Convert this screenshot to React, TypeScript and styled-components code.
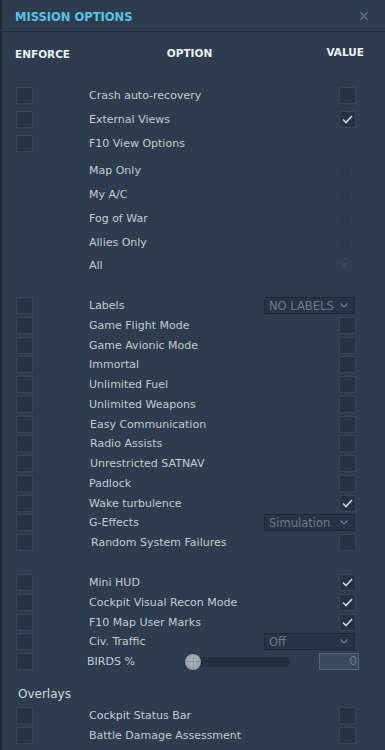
import React from 'react';
import styled, { createGlobalStyle } from 'styled-components';

const GlobalStyle = createGlobalStyle`
  html, body {
    margin: 0;
    padding: 0;
    background: #2d3c4e;
  }
  * {
    box-sizing: border-box;
  }
`;

type Opt = {
  label: string;
  value?: 'check' | 'on' | 'none' | 'radio' | 'radioOn' | 'select' | 'slider';
  select?: string;
  enforce?: boolean;
  indent?: number;
};

const topOptions: Opt[] = [
  { label: 'Crash auto-recovery', value: 'check', enforce: true },
  { label: 'External Views', value: 'on', enforce: true },
  { label: 'F10 View Options', value: 'none', enforce: true },
];

const viewOptions: Opt[] = [
  { label: 'Map Only', value: 'radio' },
  { label: 'My A/C', value: 'radio' },
  { label: 'Fog of War', value: 'radio' },
  { label: 'Allies Only', value: 'radio' },
  { label: 'All', value: 'radioOn' },
];

const gameOptions: Opt[] = [
  { label: 'Labels', value: 'select', select: 'NO LABELS', enforce: true },
  { label: 'Game Flight Mode', value: 'check', enforce: true },
  { label: 'Game Avionic Mode', value: 'check', enforce: true },
  { label: 'Immortal', value: 'check', enforce: true },
  { label: 'Unlimited Fuel', value: 'check', enforce: true },
  { label: 'Unlimited Weapons', value: 'check', enforce: true },
  { label: 'Easy Communication', value: 'check', enforce: true, indent: 1 },
  { label: 'Radio Assists', value: 'check', enforce: true, indent: 1 },
  { label: 'Unrestricted SATNAV', value: 'check', enforce: true, indent: 1 },
  { label: 'Padlock', value: 'check', enforce: true },
  { label: 'Wake turbulence', value: 'on', enforce: true },
  { label: 'G-Effects', value: 'select', select: 'Simulation', enforce: true },
  { label: 'Random System Failures', value: 'check', enforce: true, indent: 2 },
];

const miscOptions: Opt[] = [
  { label: 'Mini HUD', value: 'on', enforce: true },
  { label: 'Cockpit Visual Recon Mode', value: 'on', enforce: true },
  { label: 'F10 Map User Marks', value: 'on', enforce: true },
  { label: 'Civ. Traffic', value: 'select', select: 'Off', enforce: true },
  { label: 'BIRDS %', value: 'slider', enforce: true, indent: -2 },
];

const overlayOptions: Opt[] = [
  { label: 'Cockpit Status Bar', value: 'check', enforce: true },
  { label: 'Battle Damage Assessment', value: 'check', enforce: true },
];

const Check = ({ on }: { on?: boolean }) => (
  <Box>
    {on && (
      <svg width="11" height="9" viewBox="0 0 11 9">
        <polyline points="1,4.5 4,7.5 10,1" fill="none" stroke="#d3d9df" strokeWidth="1.6" />
      </svg>
    )}
  </Box>
);

const Chevron = () => (
  <svg width="8" height="5" viewBox="0 0 8 5">
    <polyline points="0.5,0.5 4,4 7.5,0.5" fill="none" stroke="#7b8794" strokeWidth="1.1" />
  </svg>
);

const ValueCell = ({ o }: { o: Opt }) => {
  switch (o.value) {
    case 'check':
      return <Check />;
    case 'on':
      return <Check on />;
    case 'radio':
      return <Radio />;
    case 'radioOn':
      return (
        <Radio>
          <RadioDot />
        </Radio>
      );
    case 'select':
      return (
        <Select>
          <span>{o.select}</span>
          <Chevron />
        </Select>
      );
    case 'slider':
      return (
        <SliderWrap>
          <Slider>
            <Track />
            <Thumb />
          </Slider>
          <NumberBox>0</NumberBox>
        </SliderWrap>
      );
    default:
      return null;
  }
};

const OptionRow = ({ o, h }: { o: Opt; h: number }) => (
  <Row $h={h}>
    {o.enforce ? <Box /> : <BoxSpacer />}
    <Label $indent={o.indent ?? 0}>{o.label}</Label>
    <Value $wide={o.value === 'slider'} $radio={o.value === 'radio' || o.value === 'radioOn'}>
      <ValueCell o={o} />
    </Value>
  </Row>
);

export default function App() {
  return (
    <>
      <GlobalStyle />
      <Panel>
        <Header>
          <Title>MISSION OPTIONS</Title>
          <Close>×</Close>
        </Header>
        <ColumnHeads>
          <HeadCell>ENFORCE</HeadCell>
          <HeadCell>OPTION</HeadCell>
          <HeadCell $right>VALUE</HeadCell>
        </ColumnHeads>
        <List>
          <Section>
            {topOptions.map((o) => (
              <OptionRow key={o.label} o={o} h={24} />
            ))}
          </Section>
          <Section $top={4}>
            {viewOptions.map((o) => (
              <OptionRow key={o.label} o={o} h={23.75} />
            ))}
          </Section>
          <Section $top={18}>
            {gameOptions.map((o) => (
              <OptionRow key={o.label} o={o} h={19.75} />
            ))}
          </Section>
          <Section $top={20.2}>
            {miscOptions.map((o) => (
              <OptionRow key={o.label} o={o} h={19.75} />
            ))}
          </Section>
          <GroupTitle>Overlays</GroupTitle>
          <Section>
            {overlayOptions.map((o) => (
              <OptionRow key={o.label} o={o} h={20} />
            ))}
          </Section>
        </List>
      </Panel>
    </>
  );
}

const Panel = styled.div`
  width: 385px;
  height: 750px;
  overflow: hidden;
  background: #2d3c4e;
  border-left: 2px solid #1d2836;
  font-family: 'DejaVu Sans', 'Liberation Sans', sans-serif;
`;

const Header = styled.div`
  height: 32px;
  display: flex;
  align-items: center;
  justify-content: space-between;
  padding: 2px 15px 0 13px;
  border-bottom: 1px solid #1f2b39;
`;

const Title = styled.div`
  color: #5bc2e5;
  font-weight: bold;
  font-size: 11.5px;
`;

const Close = styled.div`
  color: #5c7085;
  font-size: 15px;
  line-height: 1;
`;

const ColumnHeads = styled.div`
  height: 44px;
  display: grid;
  grid-template-columns: 1fr auto 1fr;
  align-items: center;
  padding: 0 21px 0 13px;
`;

const HeadCell = styled.div<{ $right?: boolean }>`
  color: #eef2f5;
  font-weight: bold;
  font-size: 10.5px;
  justify-self: ${(p) => (p.$right ? 'end' : 'start')};
  margin-bottom: ${(p) => (p.$right ? '4px' : '0')};
  &:nth-child(2) {
    justify-self: center;
    margin-bottom: 2px;
  }
`;

const List = styled.div`
  padding: 7px 29px 0 14px;
`;

const Section = styled.div<{ $top?: number }>`
  margin-top: ${(p) => p.$top ?? 0}px;
`;

const Row = styled.div<{ $h: number }>`
  height: ${(p) => p.$h}px;
  display: flex;
  align-items: center;
`;

const Box = styled.div`
  width: 17px;
  height: 17px;
  flex: none;
  background: #253345;
  border: 1px solid #34465a;
  display: flex;
  align-items: center;
  justify-content: center;
`;

const BoxSpacer = styled.div`
  width: 17px;
  flex: none;
`;

const Label = styled.div<{ $indent: number }>`
  margin-left: ${(p) => 56 + p.$indent}px;
  color: #c6ccd3;
  font-size: 11px;
  white-space: nowrap;
`;

const Value = styled.div<{ $wide?: boolean; $radio?: boolean }>`
  margin-left: auto;
  margin-right: ${(p) => (p.$wide ? '-3px' : p.$radio ? '4px' : '0')};
  display: flex;
  align-items: center;
`;

const Radio = styled.div`
  width: 15px;
  height: 15px;
  border-radius: 50%;
  border: 1px solid #34465a;
  display: flex;
  align-items: center;
  justify-content: center;
`;

const RadioDot = styled.div`
  width: 7px;
  height: 7px;
  border-radius: 50%;
  background: #33445a;
`;

const Select = styled.div`
  width: 91px;
  height: 17px;
  margin-right: 1px;
  background: #263447;
  border: 1px solid #1e2936;
  display: flex;
  align-items: center;
  justify-content: space-between;
  padding: 0 6px 0 4px;
  color: #707c89;
  font-size: 11.5px;
`;

const SliderWrap = styled.div`
  display: flex;
  align-items: center;
  gap: 29px;
`;

const Slider = styled.div`
  position: relative;
  width: 105px;
  height: 16px;
  display: flex;
  align-items: center;
`;

const Track = styled.div`
  margin-left: 7px;
  width: 98px;
  height: 10px;
  border-radius: 5px;
  background: #233142;
`;

const Thumb = styled.div`
  position: absolute;
  left: 0;
  top: 0;
  width: 16px;
  height: 16px;
  border-radius: 50%;
  background:
    linear-gradient(#8d97a3, #8d97a3) center / 1px 100% no-repeat,
    linear-gradient(#8d97a3, #8d97a3) center / 100% 1px no-repeat,
    radial-gradient(circle at 50% 45%, #b5bdc6 0%, #98a2ad 60%, #7f8995 100%);
`;

const NumberBox = styled.div`
  width: 40px;
  height: 17px;
  background: #3a4a5d;
  border: 1px solid #56687b;
  color: #6d7d8e;
  font-size: 12px;
  text-align: right;
  padding-right: 1px;
  line-height: 15px;
`;

const GroupTitle = styled.div`
  height: 22px;
  margin: 12px 0 0 2px;
  display: flex;
  align-items: center;
  color: #d4dae0;
  font-size: 12px;
`;
